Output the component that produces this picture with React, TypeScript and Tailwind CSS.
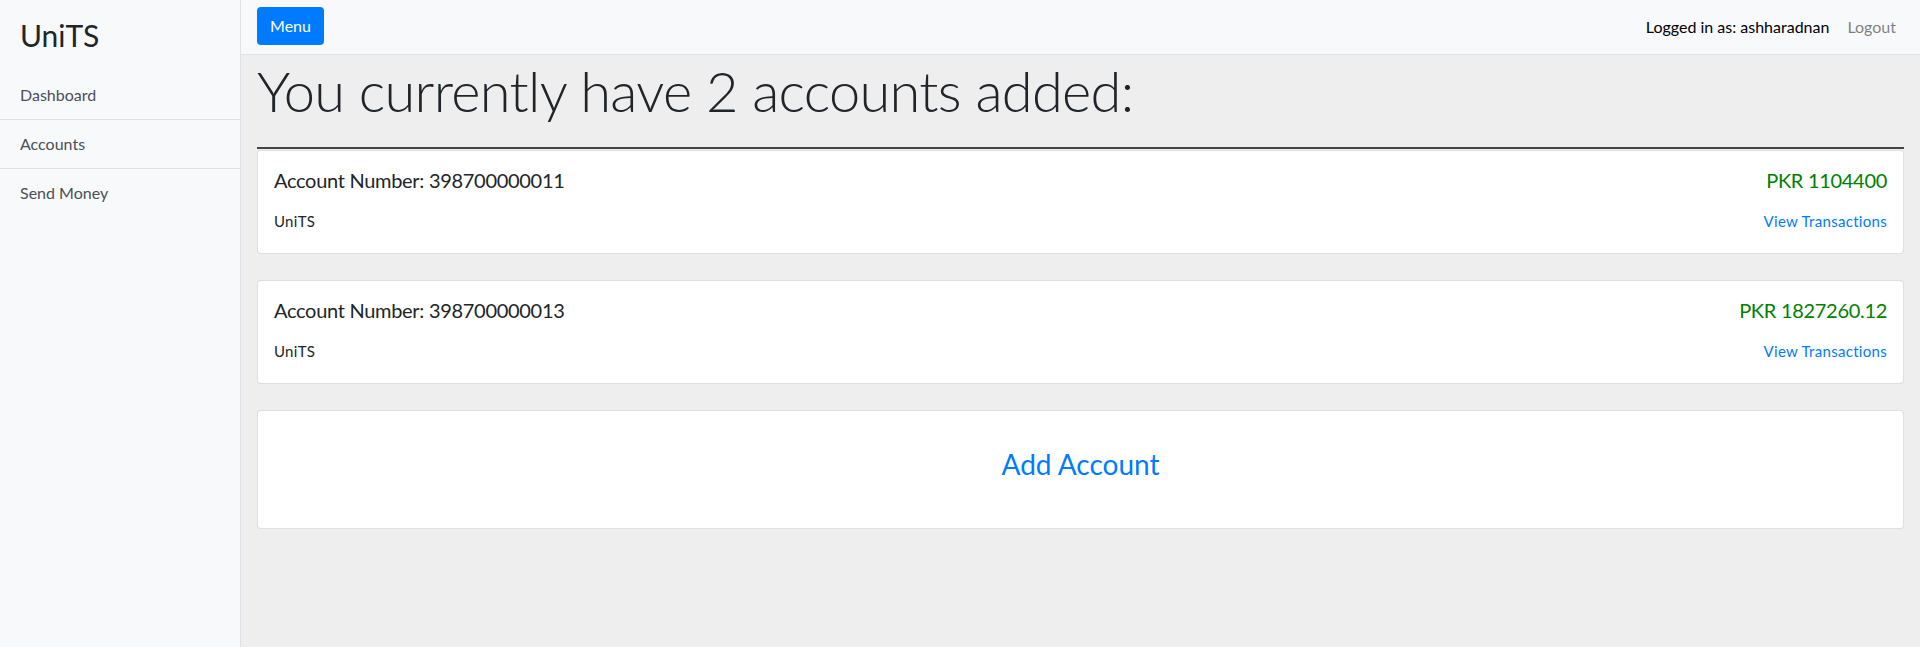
import React from "react";

const accounts = [
  { number: "398700000011", bank: "UniTS", balance: "1104400" },
  { number: "398700000013", bank: "UniTS", balance: "1827260.12" },
];

const navItems = ["Dashboard", "Accounts", "Send Money"];

function AccountCard({ number, bank, balance }: { number: string; bank: string; balance: string }) {
  return (
    <div className="bg-white border border-black/[.125] rounded px-4 pt-[17px] pb-[21px]">
      <div className="flex justify-between items-start text-[20px] leading-[24px] tracking-[-0.3px]">
        <span className="text-[#212529]">Account Number: {number}</span>
        <span className="text-[#008000]">PKR {balance}</span>
      </div>
      <div className="flex justify-between items-start mt-[19px] text-[15px] leading-[21px] tracking-[0.3px]">
        <span className="text-[#212529]">{bank}</span>
        <a href="#" className="text-[#007bff]">View Transactions</a>
      </div>
    </div>
  );
}

export default function App() {
  return (
    <div className="flex min-h-[647px] font-[Lato,'Segoe_UI',sans-serif] text-[#212529]">
      <aside className="w-[241px] shrink-0 bg-[#f8f9fa] border-r border-[#dee2e6]">
        <div className="h-[71px] pl-5 pt-[17px] text-[30px] leading-[36px]">UniTS</div>
        <nav className="flex flex-col">
          {navItems.map((item, i) => (
            <a
              key={item}
              href="#"
              className={
                "px-5 py-3 text-[16px] leading-6 text-[#495057] " +
                (i < navItems.length - 1 ? "border-b border-[#dee2e6]" : "")
              }
            >
              {item}
            </a>
          ))}
        </nav>
      </aside>

      <div className="flex-1 bg-[#eeeeee]">
        <header className="h-[55px] bg-[#f8f9fa] border-b border-[#dee2e6] flex justify-between pl-4 pr-6">
          <button className="mt-[7px] h-[38px] w-[67px] bg-[#007bff] text-white rounded text-[16px] leading-6">
            Menu
          </button>
          <div className="flex items-center gap-[18px] text-[16px] leading-6">
            <span className="text-black">Logged in as: ashharadnan</span>
            <a href="#" className="text-black/50">Logout</a>
          </div>
        </header>

        <main className="px-4 pb-8">
          <h1 className="mt-[2px] text-[56px] leading-[67px] font-light tracking-[-0.7px]">
            You currently have 2 accounts added:
          </h1>
          <div className="mt-[23px] h-[2px] bg-[#444]" />
          <div className="mt-px flex flex-col gap-[26px]">
            {accounts.map((a) => (
              <AccountCard key={a.number} {...a} />
            ))}
            <div className="bg-white border border-black/[.125] rounded h-[119px] pt-[36px] text-center">
              <a href="#" className="text-[28px] leading-[34px] text-[#007bff]">Add Account</a>
            </div>
          </div>
        </main>
      </div>
    </div>
  );
}
